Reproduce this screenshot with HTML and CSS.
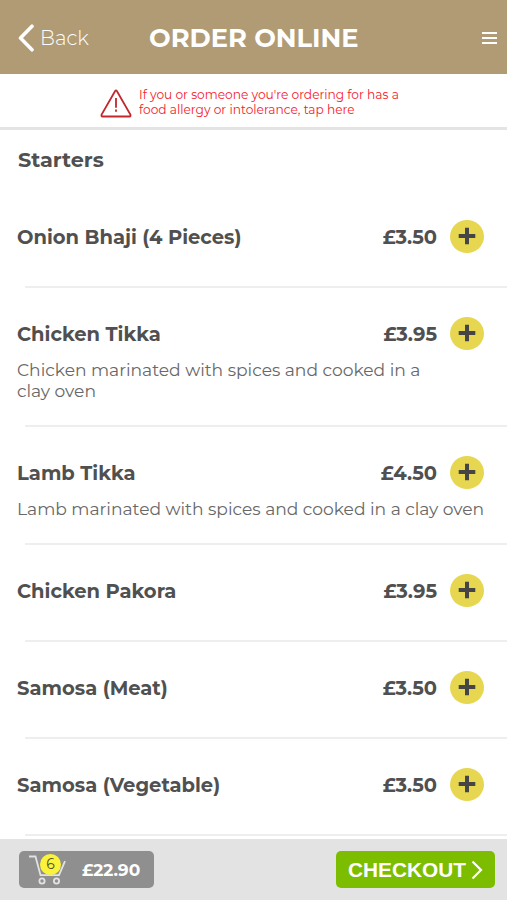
FILE: index.html
```html
<!DOCTYPE html>
<html lang="en">
<head>
<meta charset="utf-8">
<title>Order Online</title>
<link rel="stylesheet" href="styles.css">
</head>
<body>
<div class="app">
  <header class="header">
    <a class="back"><svg width="16" height="28" viewBox="0 0 16 28"><path d="M14 2.2 2.5 14 14 25.8"/></svg><span>Back</span></a>
    <h1 class="title">ORDER ONLINE</h1>
    <svg class="menu-icon" width="15" height="12" viewBox="0 0 15 12"><path d="M0 1h15M0 6h15M0 11h15"/></svg>
  </header>
  <div class="notice">
    <svg width="32" height="29" viewBox="0 0 32 29"><path d="M15 2.2Q16 .7 17 2.2L30.4 25.6Q31 27.4 29.4 27.5H2.6Q1 27.4 1.6 25.6Z"/><path d="M16 9v9.8M16 20.6v2.2"/></svg>
    <p>If you or someone you're ordering for has a<br>food allergy or intolerance, tap here</p>
  </div>
  <main class="menu">
    <h2 class="section">Starters</h2>
    <article class="item">
      <div class="line"><h3>Onion Bhaji (4 Pieces)</h3><span class="price">£3.50</span><button class="add"><svg width="18" height="18" viewBox="0 0 18 18"><path d="M9 .7v16.6M.7 9h16.6"/></svg></button></div>
    </article>
    <article class="item described">
      <div class="line"><h3>Chicken Tikka</h3><span class="price">£3.95</span><button class="add"><svg width="18" height="18" viewBox="0 0 18 18"><path d="M9 .7v16.6M.7 9h16.6"/></svg></button></div>
      <p class="desc">Chicken marinated with spices and cooked in a<br>clay oven</p>
    </article>
    <article class="item described">
      <div class="line"><h3>Lamb Tikka</h3><span class="price">£4.50</span><button class="add"><svg width="18" height="18" viewBox="0 0 18 18"><path d="M9 .7v16.6M.7 9h16.6"/></svg></button></div>
      <p class="desc">Lamb marinated with spices and cooked in a clay oven</p>
    </article>
    <article class="item">
      <div class="line"><h3>Chicken Pakora</h3><span class="price">£3.95</span><button class="add"><svg width="18" height="18" viewBox="0 0 18 18"><path d="M9 .7v16.6M.7 9h16.6"/></svg></button></div>
    </article>
    <article class="item">
      <div class="line"><h3>Samosa (Meat)</h3><span class="price">£3.50</span><button class="add"><svg width="18" height="18" viewBox="0 0 18 18"><path d="M9 .7v16.6M.7 9h16.6"/></svg></button></div>
    </article>
    <article class="item">
      <div class="line"><h3>Samosa (Vegetable)</h3><span class="price">£3.50</span><button class="add"><svg width="18" height="18" viewBox="0 0 18 18"><path d="M9 .7v16.6M.7 9h16.6"/></svg></button></div>
    </article>
  </main>
  <footer class="footer">
    <div class="basket">
      <div class="cart"><svg width="38" height="32" viewBox="0 0 38 32"><path d="M1 2.5h6.5l5 18.700H31l6-14"/><circle cx="14" cy="27" r="2.6"/><circle cx="28.5" cy="27" r="2.6"/></svg><span class="count">6</span></div>
      <span class="total">£22.90</span>
    </div>
    <button class="checkout"><span>CHECKOUT</span><svg width="12" height="20" viewBox="0 0 12 20"><path d="M1.5 1.5 10 10l-8.5 8.5"/></svg></button>
  </footer>
</div>
</body>
</html>
```
FILE: styles.css
```css
* { box-sizing: border-box; margin: 0; padding: 0; }
body { font-family: Montserrat, Inter, sans-serif; color: #505050; background: #fff; }
svg { fill: none; stroke: currentColor; flex: none; display: block; }
button { border: 0; font: inherit; color: inherit; }
.app { height: 900px; display: flex; flex-direction: column; overflow: hidden; }

.header { flex: none; height: 74px; background: #b09b74; color: #fff; display: grid; grid-template-columns: 149px 1fr 15px; align-items: center; padding: 2px 10px 0 0; }
.back { display: flex; align-items: center; gap: 6px; padding-left: 18px; font-size: 19.8px; font-weight: 300; }
.back span { margin-top: -1px; }
.back svg { stroke-width: 3.6; stroke-linecap: round; stroke-linejoin: round; }
.title { font-size: 25.7px; font-weight: 700; line-height: 30px; white-space: nowrap; }
.menu-icon { stroke-width: 2; }

.notice { flex: none; height: 56px; border-bottom: 3px solid #e4e4e4; display: flex; gap: 7px; padding: 13px 0 0 100px; color: #f5202c; font-size: 12.2px; line-height: 15px; white-space: nowrap; }
.notice svg { margin-top: 2px; stroke: #c1272d; stroke-width: 1.8; }

.menu { flex: 1; min-height: 0; overflow: hidden; }
.section { height: 61px; padding: 15px 18px 0; font-size: 20.8px; line-height: 30px; font-weight: 700; }
.item { position: relative; padding: 29px 23px 36px 17px; }
.item::after { content: ""; display: block; position: absolute; left: 25px; right: 0; bottom: 0; height: 2px; background: #eee; }
.line { display: flex; align-items: center; height: 32px; font-weight: 700; font-size: 19.5px; }
.line h3 { flex: 1; font: inherit; padding-top: 2px; }
.price { margin-right: 13px; padding-top: 2px; }
.add { width: 34px; height: 33px; border-radius: 50%; background: #e6d650; color: #454545; display: flex; align-items: center; justify-content: center; }
.add svg { stroke-width: 4; }
.described { padding-bottom: 26px; }
.desc { margin: 10px 0 0; font-size: 17.1px; line-height: 21px; color: #686868; white-space: nowrap; }

.footer { flex: none; height: 61px; background: #e3e3e3; display: flex; justify-content: space-between; align-items: center; padding: 0 12px 0 19px; }
.basket { width: 135px; height: 37px; border-radius: 5px; background: #8f8f8f; color: #fff; display: flex; align-items: center; padding-left: 9px; }
.cart { position: relative; color: #e2e2e2; }
.cart svg { stroke-width: 1.8; }
.count { position: absolute; left: 12px; top: 0; width: 21px; height: 21px; border-radius: 50%; background: #fbf33a; color: #505030; font-size: 14px; line-height: 21px; text-align: center; }
.total { margin-left: 16px; font-size: 17px; font-weight: 700; }
.checkout { width: 159px; height: 37px; border-radius: 5px; background: #7cbd00; color: #fff; display: flex; align-items: center; justify-content: center; gap: 5px; font: bold 20.8px "Liberation Sans", sans-serif; }
.checkout span { padding-top: 1px; }
.checkout svg { stroke-width: 2.2; }
```
